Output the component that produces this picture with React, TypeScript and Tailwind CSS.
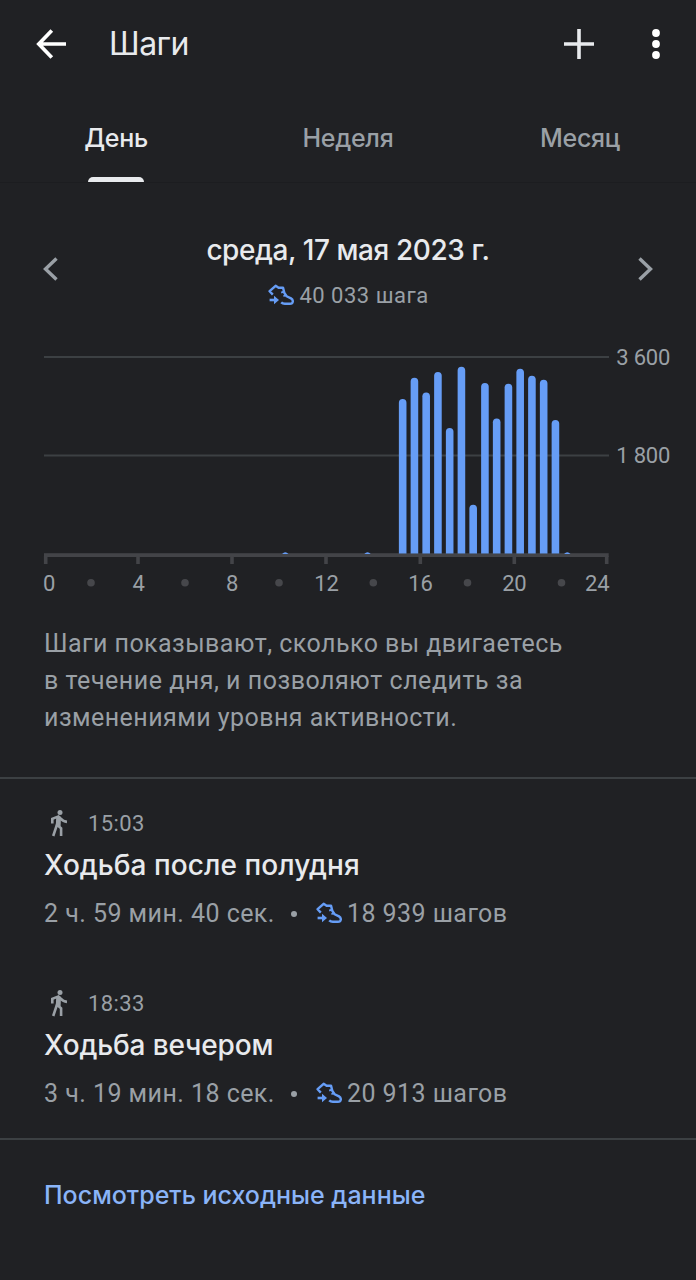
import * as React from "react";

const tabs = ["День", "Неделя", "Месяц"];

// hour of the day -> top of the bar inside the chart
const bars = [
	{ hour: 10.25, top: 206.3 },
	{ hour: 13.75, top: 205.6 },
	{ hour: 15.25, top: 52.3 },
	{ hour: 15.75, top: 31 },
	{ hour: 16.25, top: 45.7 },
	{ hour: 16.75, top: 25.3 },
	{ hour: 17.25, top: 81.3 },
	{ hour: 17.75, top: 20 },
	{ hour: 18.25, top: 158 },
	{ hour: 18.75, top: 36.3 },
	{ hour: 19.25, top: 71.7 },
	{ hour: 19.75, top: 37 },
	{ hour: 20.25, top: 22 },
	{ hour: 20.75, top: 29 },
	{ hour: 21.25, top: 33 },
	{ hour: 21.75, top: 73.3 },
	{ hour: 22.25, top: 206 },
];

const ticks = [
	{ label: "0", x: 45.7, textX: 49 },
	{ label: "4", x: 138, textX: 138.5 },
	{ label: "8", x: 232, textX: 232 },
	{ label: "12", x: 326, textX: 326.5 },
	{ label: "16", x: 420.3, textX: 420.5 },
	{ label: "20", x: 514.3, textX: 514.3 },
	{ label: "24", x: 606.7, textX: 597.2 },
];

const dots = [91, 185, 279, 373.3, 467.5, 561.5];

const activities = [
	{
		time: "15:03",
		title: "Ходьба после полудня",
		duration: "2 ч. 59 мин. 40 сек.",
		steps: "18 939 шагов",
		titleClass: "tracking-[0.05px]",
	},
	{
		time: "18:33",
		title: "Ходьба вечером",
		duration: "3 ч. 19 мин. 18 сек.",
		steps: "20 913 шагов",
		titleClass: "tracking-[-0.15px]",
	},
];

function StepsIcon() {
	return (
		<svg
			width="26"
			height="22"
			viewBox="0 0 26 22"
			fill="none"
			stroke="#669df6"
			strokeWidth="2.4"
			strokeLinejoin="round"
			className="mb-0.5 shrink-0"
		>
			<path d="M4.8 10.6 1.6 7.2 7.6 1.8 10.6 3.8 15 3.6 16.4 9 18.6 12.2 23 14.4Q25 15.6 24.8 17.6 24.4 19.8 22 19.8H16.8Q14.6 19.8 13.2 18.4" />
			<path d="M15.8 7.6 13.2 8.6M18 11 15.4 12.2" strokeWidth="1.8" />
			<path d="M1.6 16H7" strokeWidth="2.6" />
			<path d="M6 11.8 11 16 6 20.2Z" fill="#669df6" stroke="none" />
		</svg>
	);
}

function WalkIcon() {
	return (
		<svg width="20" height="28" viewBox="0 0 20 28" fill="none" stroke="#9aa0a6" strokeWidth="2.6" className="shrink-0">
			<circle cx="10" cy="3.5" r="2.5" fill="#9aa0a6" stroke="none" />
			<path d="M2.3 14.4V9.9L8.4 7.4 11 9.8Q13 12.6 17 12.9" />
			<path d="M6.2 8 11 7.8 10.6 17.6 5.8 17.2Z" fill="#9aa0a6" stroke="none" />
			<path d="M7.2 15 3.2 27M7.6 16.2 11.1 19.4V27" />
		</svg>
	);
}

function Chart() {
	return (
		<svg
			width="696"
			height="270"
			viewBox="0 -10 696 270"
			className="block shrink-0 font-['Roboto',sans-serif] text-[22px]"
		>
			<g fill="#3c4043">
				<rect x="44" y="9" width="565" height="2" />
				<rect x="44" y="107.5" width="565" height="2" />
			</g>
			<rect x="44" y="206.2" width="564.7" height="3.8" fill="#434448" />
			{bars.map((b) => (
				<path
					key={b.hour}
					fill="#669df6"
					d={
						b.top > 200
							? `M${41.2 + 23.5 * b.hour} 207q3.2-3.4 6.4 0z`
							: `M${40.5 + 23.5 * b.hour} 206.6V${b.top + 3.5}a3.8 3.8 0 0 1 7.6 0V206.6z`
					}
				/>
			))}
			{ticks.map((t) => (
				<g key={t.label}>
					<rect x={t.x - 1.8} y="209" width="3.6" height="8" fill="#434448" />
					<text x={t.textX} y="243.5" textAnchor="middle" fill="#9aa0a6" className="tracking-[-0.2px]">
						{t.label}
					</text>
				</g>
			))}
			{dots.map((x) => (
				<circle key={x} cx={x} cy="235.8" r="3.8" fill="#46474b" />
			))}
			<g fill="#9aa0a6" textAnchor="end" className="tracking-[-0.2px]">
				<text x="670.2" y="18">
					3 600
				</text>
				<text x="670.2" y="116">
					1 800
				</text>
			</g>
		</svg>
	);
}

export default function App() {
	const [active, setActive] = React.useState(0);

	return (
		<div className="flex h-[1280px] w-[696px] flex-col overflow-hidden bg-[#202124] font-['Roboto',sans-serif] text-[#9aa0a6]">
			{/* App bar */}
			<header className="flex h-[88px] shrink-0 items-center pl-9">
				<svg width="30" height="30" viewBox="0 0 30 30" fill="none" stroke="#fff" strokeWidth="3.7">
					<path d="M30 15H3M15.8 1.5 2.8 15 15.8 28.5" />
				</svg>
				<h1 className="ml-[43px] flex-1 font-['Inter',sans-serif] text-[32px] tracking-[-0.5px] text-[#e8eaed]">Шаги</h1>
				<button type="button" aria-label="Добавить" className="mr-[58px] pb-px">
					<svg width="30" height="30" viewBox="0 0 30 30" stroke="#e8eaed" strokeWidth="3.6">
						<path d="M15 0V30M0 15H30" />
					</svg>
				</button>
				<button type="button" aria-label="Ещё" className="mr-9">
					<svg width="8" height="30" viewBox="0 0 8 30" fill="#fff">
						<circle cx="4" cy="4" r="3.9" />
						<circle cx="4" cy="15" r="3.9" />
						<circle cx="4" cy="26" r="3.9" />
					</svg>
				</button>
			</header>

			{/* Tabs */}
			<nav className="grid h-[95px] shrink-0 grid-cols-3 border-b border-[#1c1d20]">
				{tabs.map((tab, i) => (
					<button
						type="button"
						key={tab}
						onClick={() => setActive(i)}
						className={`flex flex-col items-center justify-between pt-8 font-['Inter',sans-serif] text-[25px] leading-9 font-medium tracking-[-0.3px] ${
							active === i ? "text-[#e8eaed]" : "text-[#9aa0a6]"
						}`}
					>
						{tab}
						{active === i && <span className="h-[5px] w-14 rounded-t-[5px] bg-[#e8eaed]" />}
					</button>
				))}
			</nav>

			{/* Day picker */}
			<section className="flex h-[154px] shrink-0 items-start justify-between px-[43px] pt-[49px]">
				<svg width="15" height="24" viewBox="0 0 15 24" fill="none" stroke="#9aa0a6" strokeWidth="3.4" className="mt-[25px]">
					<path d="M13.5 1.5 2.5 12 13.5 22.5" />
				</svg>
				<div className="flex flex-col items-center">
					<h2 className="font-['Inter',sans-serif] text-[28px] leading-9 font-medium tracking-[-0.43px] text-[#e8eaed]">
						среда, 17 мая 2023 г.
					</h2>
					<p className="mt-[14px] ml-px flex items-center gap-[5px] text-[22px] leading-7 tracking-[0.5px]">
						<StepsIcon />
						40 033 шага
					</p>
				</div>
				<svg width="15" height="24" viewBox="0 0 15 24" fill="none" stroke="#9aa0a6" strokeWidth="3.4" className="mt-[25px]">
					<path d="M1.5 1.5 12.5 12 1.5 22.5" />
				</svg>
			</section>

			<Chart />

			<p className="h-[170px] shrink-0 pt-[18px] pl-11 text-[25px] leading-[37px] tracking-[0.45px]">
				Шаги показывают, сколько вы двигаетесь
				<br />
				<span className="tracking-[0.52px]">в течение дня, и позволяют следить за</span>
				<br />
				изменениями уровня активности.
			</p>

			{/* Activities */}
			<section className="h-[363px] shrink-0 border-y-2 border-[#3c4043] pt-[26px]">
				{activities.map((a) => (
					<article key={a.time} className="h-[180px] pl-11">
						<div className="flex h-[36px] items-center text-[22px] tracking-[0.4px]">
							<span className="mr-[18px] ml-[6px]">
								<WalkIcon />
							</span>
							{a.time}
						</div>
						<h3
							className={`mt-[6px] font-['Inter',sans-serif] text-[28px] leading-9 font-medium text-[#e8eaed] ${a.titleClass}`}
						>
							{a.title}
						</h3>
						<p className="mt-[13px] flex items-center text-[25px] leading-9 tracking-[0.45px]">
							{a.duration}
							<span className="mr-[19px] ml-4 size-[6px] rounded-full bg-[#9aa0a6]" />
							<StepsIcon />
							<span className="ml-[5px]">{a.steps}</span>
						</p>
					</article>
				))}
			</section>

			<a href="#data" className="mt-[37px] ml-11 font-['Inter',sans-serif] text-[25px] leading-9 font-medium text-[#8ab4f8]">
				Посмотреть исходные данные
			</a>
		</div>
	);
}
